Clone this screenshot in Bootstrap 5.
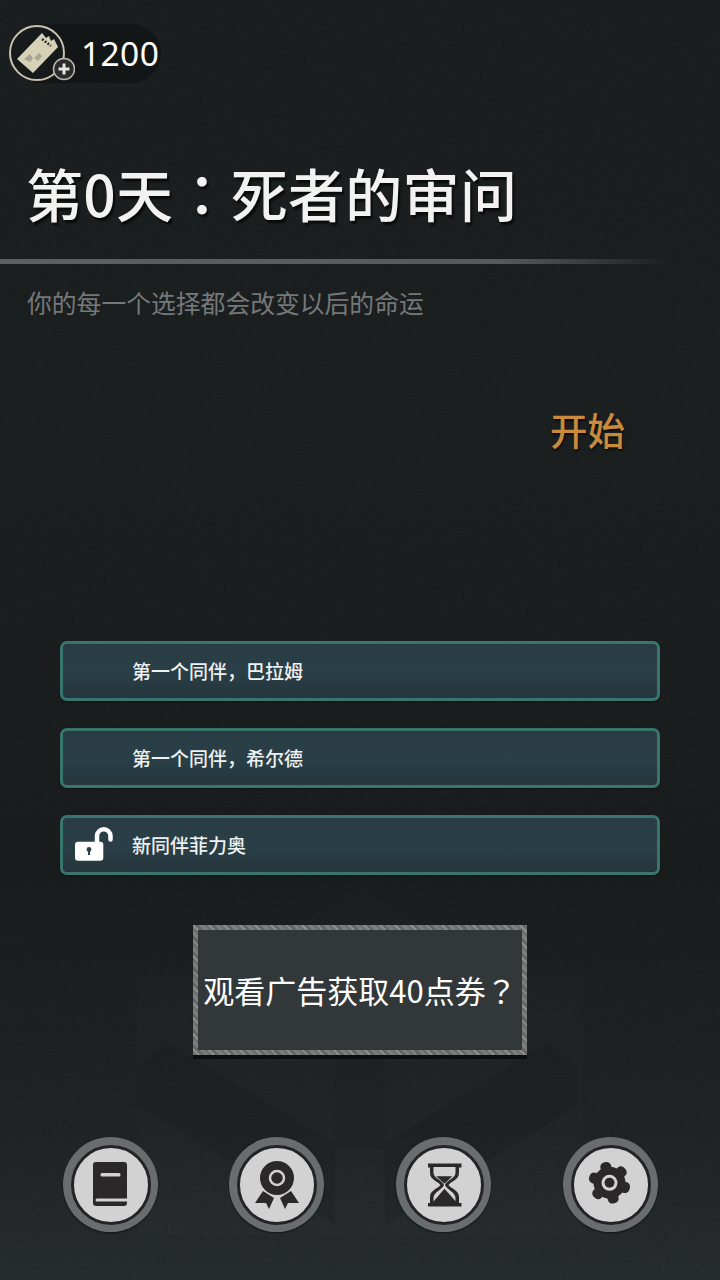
<!DOCTYPE html>
<html lang="zh">
<head>
<meta charset="utf-8">
<title>第0天</title>
<link href="https://cdn.jsdelivr.net/npm/bootstrap@5.3.0/dist/css/bootstrap.min.css" rel="stylesheet">
<style>
html,body{margin:0;height:1280px;overflow:hidden}
body{font-family:"Liberation Sans","Noto Sans CJK SC",sans-serif;background:#1b1f20}
.stage{width:720px;height:1280px;position:relative;overflow:hidden;background:linear-gradient(180deg,#1c2021 0,#1d2122 35%,#1b1e1f 68%,#212525 88%,#292e2e 100%)}
.wm{position:absolute;left:0;top:880px;width:720px;height:400px}
.grain{position:absolute;left:0;top:0;width:720px;height:1280px;opacity:.13}
.flowbox{position:relative;height:1280px}
.ticketbar{padding:24px 0 0 10px;height:88px}
.ticketpill{height:59px;width:127px;background:#131617;border-radius:0 30px 30px 0;margin-left:24px;padding-left:47px;color:#fff;font-size:33.5px;letter-spacing:.4px;line-height:59px;font-family:"Noto Sans","Liberation Sans",sans-serif;position:relative}
.ticketico{position:absolute;left:-25px;top:1px;width:66px;height:66px}
.headline{font-family:"Noto Sans CJK SC",sans-serif;font-size:57px;font-weight:500;color:#f2f2f0;line-height:80px;margin:64px 0 0 26px;white-space:nowrap;text-shadow:2px 3px 2px rgba(0,0,0,.65);letter-spacing:.3px}
.tcpunct{font-family:"Noto Sans CJK TC",sans-serif}
.rule{height:5px;margin-top:27px;width:670px;background:linear-gradient(90deg,#5c6061 0,#555a5a 75%,rgba(80,85,85,0) 100%)}
.subline{font-family:"Noto Sans CJK SC",sans-serif;font-size:24.8px;line-height:34px;color:#757878;margin:21px 0 0 27px;white-space:nowrap}
.startlink{font-family:"Noto Sans CJK SC",sans-serif;font-size:37.5px;font-weight:500;line-height:50px;color:#c98a3c;text-align:right;margin:85px 95px 0 0;text-shadow:1px 2px 2px rgba(0,0,0,.6)}
.choices{margin:187px 60px 0;gap:27px}
.choice{height:60px;background:linear-gradient(180deg,#293c43 0,#2a3f47 50%,#26363c 100%);border:3px solid #37756e;border-radius:7px;color:#eef1f1;font-family:"Noto Sans CJK SC",sans-serif;font-size:19px;font-weight:500;padding-left:69px;position:relative;box-shadow:0 1px 2px rgba(0,0,0,.4)}
.lockico{position:absolute;left:12px;top:9px;width:40px;height:36px}
.adbox{width:334px;height:130px;margin:50px auto 0;background:#323839;border:5px solid #7a7c7c;border-image:repeating-linear-gradient(45deg,#6f7171 0 3px,#8c8e8e 3px 5px,#666868 5px 8px,#7d7f7f 8px 11px) 5;box-shadow:0 4px 0 #0c0d0e;color:#fff;font-family:"Noto Sans CJK SC",sans-serif;font-size:31px;white-space:nowrap}
.dock{position:absolute;left:0;right:0;top:1137px;height:95px}
.roundbtn{position:absolute;top:0;width:95px;height:95px;border-radius:50%;background:#6a6d6d;display:flex;align-items:center;justify-content:center;box-shadow:0 1px 2px rgba(0,0,0,.5)}
.roundin{width:74px;height:74px;border-radius:50%;background:#d2d2d2;border:3px solid #232425;box-sizing:content-box;display:flex;align-items:center;justify-content:center}
.roundin svg{width:64px;height:64px;flex:none}
.p1{left:63px}.p2{left:229px}.p3{left:396px}.p4{left:563px}
</style>
</head>
<body>
<div class="stage">
  <svg class="wm" viewBox="0 0 720 400" aria-hidden="true">
    <g fill="#fff" fill-opacity=".012">
      <polygon points="137,97 583,97 583,355 137,355"/>
      <polygon points="360,5 500,97 220,97"/>
    </g>
    <g fill="#000" fill-opacity=".08">
      <polygon points="167,163 335,263 335,345 137,225 137,187"/>
      <polygon points="548,163 385,263 385,345 578,225 578,187"/>
    </g>
    <rect x="335" y="90" width="50" height="180" fill="#000" fill-opacity=".05"/>
  </svg>
  <svg class="grain" aria-hidden="true">
    <filter id="nz"><feTurbulence type="fractalNoise" baseFrequency=".45" numOctaves="3"/><feColorMatrix values="0 0 0 0 0 0 0 0 0 0 0 0 0 0 0 0 0 0 1.6 -.45"/></filter>
    <rect width="720" height="1280" filter="url(#nz)"/>
  </svg>
  <div class="flowbox">
    <div class="ticketbar">
      <div class="ticketpill">
        <svg class="ticketico" viewBox="0 0 66 66" aria-hidden="true">
          <circle cx="28" cy="28" r="27" fill="#171a1a" stroke="#c8c4b0" stroke-width="2"/>
          <polygon points="8,34 33,8 37,13 40,11 42,16 45,14 49,22 24,48" fill="#d6d2b8"/>
          <path d="M33 14l9 7" stroke="#2f2f2a" stroke-width="2.500" stroke-dasharray="2 1.500" fill="none"/>
          <path d="M15 34l6-5 3 4-3 4zM25 33l5-5 3 3-4 5z" fill="#a8a491"/>
          <circle cx="55" cy="44" r="10.500" fill="#2b2a2c" stroke="#bdb9ae" stroke-width="1.500"/>
          <path d="M55 38.500v11M49.500 44h11" stroke="#e8e6e0" stroke-width="3"/>
        </svg>
        1200
      </div>
    </div>
    <h1 class="headline">第0天<span class="tcpunct" lang="zh-Hant">：</span>死者的审问</h1>
    <div class="rule"></div>
    <p class="subline mb-0">你的每一个选择都会改变以后的命运</p>
    <div class="startlink">开始</div>
    <div class="choices d-flex flex-column">
      <div class="choice d-flex align-items-center">第一个同伴，巴拉姆</div>
      <div class="choice d-flex align-items-center">第一个同伴，希尔德</div>
      <div class="choice d-flex align-items-center">
        <svg class="lockico" viewBox="0 0 40 36" aria-hidden="true">
          <path d="M22 16V9a6.750 6.750 0 0 1 13.500 0v3.500" fill="none" stroke="#fff" stroke-width="4.500" stroke-linecap="round"/>
          <rect x="0" y="14.700" width="28.300" height="19" rx="3" fill="#fff"/>
          <circle cx="14" cy="22.500" r="2.400" fill="#2a3f46"/>
          <rect x="13" y="23" width="2" height="5" fill="#2a3f46"/>
        </svg>
        新同伴菲力奥
      </div>
    </div>
    <div class="adbox d-flex align-items-center justify-content-center">观看广告获取40点券<span class="tcpunct" lang="zh-Hant">？</span></div>
    <div class="dock">
      <div class="roundbtn p1"><div class="roundin">
        <svg viewBox="0 0 64 64" aria-hidden="true">
          <rect x="14" y="9" width="34" height="44" rx="3" fill="#2a2829"/>
          <path d="M18 45.500H48v3H18a1.500 1.500 0 0 1 0-3z" fill="#d2d2d2"/>
          <rect x="21.500" y="20" width="20" height="3.500" rx="1.500" fill="#d2d2d2"/>
        </svg>
      </div></div>
      <div class="roundbtn p2"><div class="roundin">
        <svg viewBox="0 0 64 64" aria-hidden="true">
          <circle cx="32" cy="25" r="17" fill="#2a2829"/>
          <circle cx="32" cy="25" r="7" fill="#2a2829" stroke="#d2d2d2" stroke-width="2.500"/>
          <polygon points="18,38 10,50 21,50 24,56 29,45" fill="#2a2829"/>
          <polygon points="46,38 54,50 43,50 40,56 35,45" fill="#2a2829"/>
        </svg>
      </div></div>
      <div class="roundbtn p3"><div class="roundin">
        <svg viewBox="0 0 64 64" aria-hidden="true">
          <rect x="16" y="10.500" width="33.500" height="4" fill="#2a2829"/>
          <rect x="16" y="50" width="33.500" height="3.500" fill="#2a2829"/>
          <path d="M18 14H47V20C47 27 38 29 36.500 32C38 35 47 37 47 44V50H18V44C18 37 27 35 28.500 32C27 29 18 27 18 20Z" fill="#2a2829"/>
          <path d="M21.500 14H43.500V20C43.500 25 35 27 33 32C35 37 43.500 39 43.500 45V50H21.500V45C21.500 39 30 37 32 32C30 27 21.500 25 21.500 20Z" fill="#d2d2d2"/>
          <polygon points="24.200,23.200 40.200,23.200 32.500,30.800" fill="#2a2829"/>
          <polygon points="20.200,50 45.200,50 32.500,35.800" fill="#2a2829"/>
        </svg>
      </div></div>
      <div class="roundbtn p4"><div class="roundin">
        <svg viewBox="0 0 64 64" aria-hidden="true">
          <g fill="#2a2829" transform="translate(-1.500,-2.200) rotate(-13 32 32)">
            <circle cx="32" cy="32" r="16"/>
            <rect x="26.500" y="11" width="11" height="12" rx="4.500"/>
            <rect x="26.500" y="11" width="11" height="12" rx="4.500" transform="rotate(60 32 32)"/>
            <rect x="26.500" y="11" width="11" height="12" rx="4.500" transform="rotate(120 32 32)"/>
            <rect x="26.500" y="11" width="11" height="12" rx="4.500" transform="rotate(180 32 32)"/>
            <rect x="26.500" y="11" width="11" height="12" rx="4.500" transform="rotate(240 32 32)"/>
            <rect x="26.500" y="11" width="11" height="12" rx="4.500" transform="rotate(300 32 32)"/>
          </g>
          <circle cx="30.500" cy="29.800" r="8" fill="#d2d2d2"/>
          <circle cx="30.500" cy="29.800" r="5" fill="#2a2829"/>
        </svg>
      </div></div>
    </div>
  </div>
</div>
<script src="https://cdn.jsdelivr.net/npm/bootstrap@5.3.0/dist/js/bootstrap.bundle.min.js"></script>
</body>
</html>
